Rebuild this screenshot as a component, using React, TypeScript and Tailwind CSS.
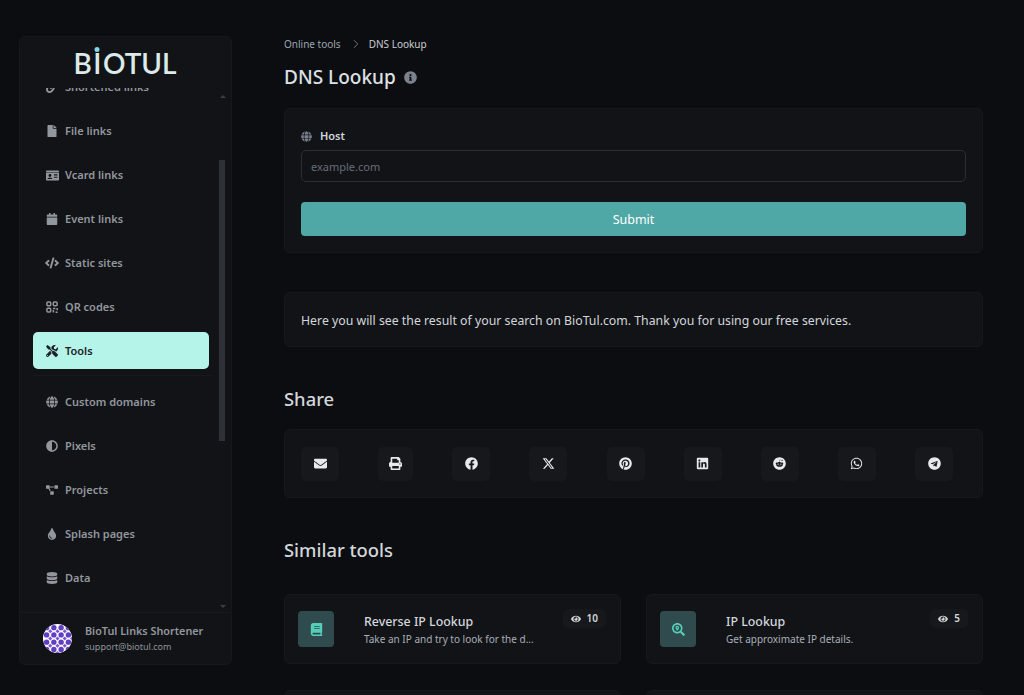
import type { ReactNode } from "react"
import {
  FaAdjust,
  FaBook,
  FaCalendar,
  FaCode,
  FaDatabase,
  FaEnvelope,
  FaEye,
  FaFacebook,
  FaFile,
  FaGlobe,
  FaIdCard,
  FaInfoCircle,
  FaLink,
  FaLinkedin,
  FaPinterest,
  FaPrint,
  FaProjectDiagram,
  FaReddit,
  FaSearchLocation,
  FaTelegram,
  FaTint,
  FaTools,
  FaWhatsapp,
} from "react-icons/fa"
import { FaXTwitter } from "react-icons/fa6"
import { ChevronRight } from "lucide-react"

function QrIcon() {
  return (
    <svg viewBox="0 0 12 12" className="h-[12px] w-[12px]" fill="none" stroke="currentColor" strokeWidth="1.5">
      <rect x="0.9" y="0.9" width="3.8" height="3.8" rx="1" />
      <rect x="7.3" y="0.9" width="3.8" height="3.8" rx="1" />
      <rect x="0.9" y="7.3" width="3.8" height="3.8" rx="1" />
      <path d="M7 7.4h2.4M11.2 7v2.2M7.4 9v2.6M9.6 11.2h2" />
    </svg>
  )
}

const topLinks = [
  { label: "File links", icon: <FaFile /> },
  { label: "Vcard links", icon: <FaIdCard className="text-[13px]" /> },
  { label: "Event links", icon: <FaCalendar /> },
  { label: "Static sites", icon: <FaCode className="text-[14px]" /> },
  { label: "QR codes", icon: <QrIcon /> },
]

const bottomLinks = [
  { label: "Custom domains", icon: <FaGlobe /> },
  { label: "Pixels", icon: <FaAdjust /> },
  { label: "Projects", icon: <FaProjectDiagram /> },
  { label: "Splash pages", icon: <FaTint /> },
  { label: "Data", icon: <FaDatabase /> },
]

const shareIcons = [
  { icon: <FaEnvelope />, width: "w-[38px]" },
  { icon: <FaPrint />, width: "w-[35px]" },
  { icon: <FaFacebook />, width: "w-[38px]" },
  { icon: <FaXTwitter />, width: "w-[38px]" },
  { icon: <FaPinterest />, width: "w-[38px]" },
  { icon: <FaLinkedin />, width: "w-[38px]" },
  { icon: <FaReddit />, width: "w-[38px]" },
  { icon: <FaWhatsapp />, width: "w-[38px]" },
  { icon: <FaTelegram />, width: "w-[38px]" },
]

function NavItem({ label, icon }: { label: string; icon: ReactNode }) {
  return (
    <div className="flex h-[44px] items-center pl-[9px] text-[#92979e]">
      <span className="flex w-[20px] justify-center text-[12px]">{icon}</span>
      <span className="ml-[3px] text-[11px] font-semibold">{label}</span>
    </div>
  )
}

function Avatar() {
  const cells = [0, 1, 2, 3]
  return (
    <svg viewBox="0 0 28 28" className="h-[29px] w-[29px] shrink-0">
      <defs>
        <clipPath id="avatar-clip">
          <circle cx="14" cy="14" r="14" />
        </clipPath>
      </defs>
      <g clipPath="url(#avatar-clip)">
        <rect width="28" height="28" fill="#ffffff" />
        {cells.map((x) =>
          cells.map((y) => (
            <g key={`${x}-${y}`}>
              <circle cx={3.5 + x * 7} cy={3.5 + y * 7} r="2.6" fill="#5f3dc4" />
              <path d={`M${7 + x * 7} ${5 + y * 7}l2 2-2 2-2-2z`} fill="#7a55cf" />
            </g>
          )),
        )}
      </g>
    </svg>
  )
}

function Sidebar() {
  return (
    <aside className="relative ml-[19px] mt-[36px] flex h-[629px] w-[213px] shrink-0 flex-col rounded-md border border-[#16181b] bg-[#121316]">
      {/* Logo */}
      <div className="flex h-[51px] shrink-0 items-center justify-center pr-[1px]">
        <span className="flex font-['Lato',sans-serif] text-[28px] font-semibold leading-none text-[#dcebea]">
          B
          <span className="relative mx-[1.5px]">
            I
            <span className="absolute left-1/2 top-[-2px] h-[5px] w-[5px] -translate-x-1/2 rounded-full bg-[#7fd8e6]" />
          </span>
          OTUL
        </span>
      </div>

      {/* Scrolling nav */}
      <div className="h-[524px] overflow-hidden">
        <div className="-mt-[23px]">
          <div className="ml-[13px]">
            <NavItem label="Shortened links" icon={<FaLink />} />
            {topLinks.map((link) => (
              <NavItem key={link.label} {...link} />
            ))}
            <div className="mt-[3px] flex h-[37px] w-[176px] items-center rounded-[5px] bg-[#b5f5e9] pl-[9px] pt-[1px] text-[#1d2226]">
              <span className="flex w-[20px] justify-center text-[12px]">
                <FaTools />
              </span>
              <span className="ml-[3px] text-[11px] font-semibold">Tools</span>
            </div>
            <div className="mb-[4px] mt-[6px] h-px w-[180px] bg-[#16181b]" />
            {bottomLinks.map((link) => (
              <NavItem key={link.label} {...link} />
            ))}
          </div>
        </div>
      </div>

      {/* Scrollbar */}
      <div className="absolute left-[199px] top-[123px] h-[281px] w-[6px] bg-[#2e3238]" />
      <div className="absolute left-[200px] top-[58px] h-0 w-0 border-x-[3px] border-b-[3px] border-x-transparent border-b-[#3a3e44]" />
      <div className="absolute left-[200px] top-[568px] h-0 w-0 border-x-[3px] border-t-[3px] border-x-transparent border-t-[#3a3e44]" />

      {/* Account */}
      <div className="flex flex-1 items-center border-t border-[#17191c] pl-[23px]">
        <Avatar />
        <div className="ml-[13px] flex flex-col gap-[1px]">
          <span className="text-[10.8px] font-semibold leading-[16px] text-[#92979e]">BioTul Links Shortener</span>
          <span className="text-[9px] leading-[14px] text-[#8f949b]">support@biotul.com</span>
        </div>
      </div>
    </aside>
  )
}

function ToolCard({ icon, title, text, views }: { icon: ReactNode; title: string; text: string; views: number }) {
  return (
    <div className="relative flex h-[70px] items-center rounded-md border border-[#16181b] bg-[#121316] pl-[13px]">
      <div className="flex h-[36px] w-[36px] shrink-0 items-center justify-center rounded-[4px] bg-[#2f4b4d] text-[13px] text-[#55cdb9]">
        {icon}
      </div>
      <div className="ml-[30px] flex flex-col pt-[1px]">
        <span className="text-[12.4px] font-medium leading-[18px] text-[#d3d7dc]">{title}</span>
        <span className="text-[10px] leading-[16px] text-[#a9afb8]">{text}</span>
      </div>
      <div className="absolute right-[14px] top-[14px] flex h-[19px] items-center gap-[6px] rounded-[5px] bg-[#17181c] px-[8px] text-[10px] font-semibold text-[#d3d7dc]">
        <FaEye className="text-[10px]" />
        {views}
      </div>
    </div>
  )
}

export default function App() {
  return (
    <div className="flex h-[695px] overflow-hidden bg-[#0c0d10] font-['Noto_Sans',sans-serif]">
      <Sidebar />

      <main className="ml-[52px] w-[699px] shrink-0">
        {/* Breadcrumb */}
        <div className="mt-[36px] flex h-[16px] items-center text-[10px]">
          <span className="text-[#9ca3af]">Online tools</span>
          <ChevronRight className="ml-[8px] mr-[6px] h-[14px] w-[14px] text-[#7d838b]" strokeWidth={1.5} />
          <span className="text-[#c9ced4]">DNS Lookup</span>
        </div>

        {/* Title */}
        <div className="mt-[12px] flex h-[26px] items-center">
          <h1 className="text-[19px] font-medium leading-none text-[#dde1e6]">DNS Lookup</h1>
          <FaInfoCircle className="ml-[8px] text-[13px] text-[#7b828d]" />
        </div>

        {/* Form */}
        <section className="mt-[18px] h-[145px] rounded-md border border-[#16181b] bg-[#121316] px-[16px] pt-[19px]">
          <div className="flex h-[16px] items-center text-[#7b828d]">
            <FaGlobe className="text-[11px]" />
            <label className="ml-[8px] text-[11px] font-semibold text-[#d3d7dc]">Host</label>
          </div>
          <input
            placeholder="example.com"
            className="mt-[6px] block h-[32px] w-full rounded-[5px] border border-[#2b2e33] bg-transparent px-[9px] text-[11px] placeholder:text-[#666d78]"
          />
          <button className="mt-[20px] h-[34px] w-full rounded-[4px] bg-[#4fa8a6] pt-[2px] text-[12.5px] text-white">Submit</button>
        </section>

        {/* Result */}
        <section className="mt-[39px] flex h-[55px] items-center rounded-md border border-[#16181b] bg-[#121316] px-[16px] pt-[3px] text-[12.3px] text-[#d3d7dc]">
          Here you will see the result of your search on BioTul.com. Thank you for using our free services.
        </section>

        {/* Share */}
        <h2 className="mt-[39px] h-[26px] text-[18.4px] font-medium leading-[26px] text-[#d3d7dc]">Share</h2>
        <section className="mt-[17px] flex h-[69px] items-center justify-between rounded-md border border-[#16181b] bg-[#121316] pl-[16px] pr-[29px]">
          {shareIcons.map((item, i) => (
            <div
              key={i}
              className={`flex h-[34px] ${item.width} items-center justify-center rounded-[5px] bg-[#17181c] text-[13px] text-[#e8e9eb]`}
            >
              {item.icon}
            </div>
          ))}
        </section>

        {/* Similar tools */}
        <h2 className="mt-[39px] h-[26px] text-[18.4px] font-medium leading-[26px] text-[#d3d7dc]">Similar tools</h2>
        <div className="mt-[31px] grid grid-cols-[337px_337px] gap-x-[25px] gap-y-[26px]">
          <ToolCard icon={<FaBook />} title="Reverse IP Lookup" text="Take an IP and try to look for the d..." views={10} />
          <ToolCard icon={<FaSearchLocation />} title="IP Lookup" text="Get approximate IP details." views={5} />
          <div className="h-[70px] rounded-md border border-[#16181b] bg-[#121316]" />
          <div className="h-[70px] rounded-md border border-[#16181b] bg-[#121316]" />
        </div>
      </main>
    </div>
  )
}
